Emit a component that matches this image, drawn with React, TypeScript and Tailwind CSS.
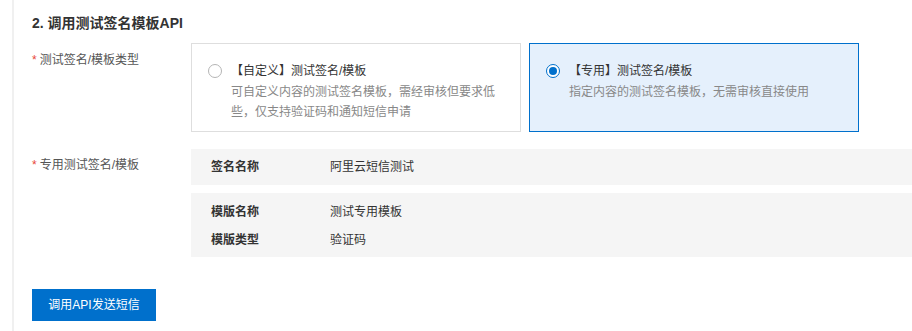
import React, { useState } from "react"

const FONT = "font-['Liberation_Sans','Noto_Sans_CJK_SC',sans-serif]"

type CardOption = {
    key: string
    title: string
    desc: string
}

const OPTIONS: CardOption[] = [
    {
        key: "custom",
        title: "【自定义】测试签名/模板",
        desc: "可自定义内容的测试签名模板，需经审核但要求低些，仅支持验证码和通知短信申请",
    },
    {
        key: "dedicated",
        title: "【专用】测试签名/模板",
        desc: "指定内容的测试签名模板，无需审核直接使用",
    },
]

function Label({ children, className = "" }: { children: React.ReactNode; className?: string }) {
    return (
        <div className={`w-[159px] shrink-0 text-[12px] leading-[20px] text-[#555] ${className}`}>
            <span className="text-[#e84738] mr-[3px]">*</span>
            {children}
        </div>
    )
}

function Radio({ checked }: { checked: boolean }) {
    return checked ? (
        <span className="mt-[3px] flex h-[14px] w-[14px] shrink-0 items-center justify-center rounded-full border border-[#0070cc] bg-white">
            <span className="h-[8px] w-[8px] rounded-full bg-[#0070cc]" />
        </span>
    ) : (
        <span className="mt-[3px] h-[14px] w-[14px] shrink-0 rounded-full border border-[#b5b5b5] bg-white" />
    )
}

export default function App() {
    const [selected, setSelected] = useState("dedicated")

    return (
        <div className={`min-h-[331px] w-full bg-white pl-[12px] ${FONT}`}>
            <div className="min-h-[331px] border-l-2 border-[#f0f0f0] pl-[18px] pt-[13px]">
                {/* Section title */}
                <h2 className="text-[14px] font-bold leading-[20px] text-[#333]">
                    2. 调用测试签名模板API
                </h2>

                {/* Type selection */}
                <div className="mt-[10px] flex">
                    <Label className="pt-[7px]">测试签名/模板类型</Label>
                    <div className="flex gap-[8px]">
                        {OPTIONS.map((opt) => {
                            const active = selected === opt.key
                            return (
                                <button
                                    key={opt.key}
                                    type="button"
                                    onClick={() => setSelected(opt.key)}
                                    className={`flex h-[89px] w-[330px] gap-[9px] border pl-[16px] pr-[15px] pt-[17px] text-left ${
                                        active
                                            ? "border-[#0070cc] bg-[#e5f0fc]"
                                            : "border-[#dedede] bg-white"
                                    }`}
                                >
                                    <Radio checked={active} />
                                    <div className="text-[12px] leading-[20px]">
                                        <div className="text-[#333]">{opt.title}</div>
                                        <div className="mt-[1px] text-[#888]">{opt.desc}</div>
                                    </div>
                                </button>
                            )
                        })}
                    </div>
                </div>

                {/* Dedicated signature / template info */}
                <div className="mt-[17px] flex">
                    <Label className="pt-[6px]">专用测试签名/模板</Label>
                    <div className="flex flex-1 flex-col gap-[8px] text-[12px] text-[#333]">
                        <div className="flex h-[36px] items-center bg-[#f5f5f5] pl-[20px]">
                            <span className="w-[119px] font-bold">签名名称</span>
                            <span>阿里云短信测试</span>
                        </div>
                        <div className="bg-[#f5f5f5] pb-[3px] pl-[20px] pt-[5px] leading-[28px]">
                            <div className="flex">
                                <span className="w-[119px] font-bold">模版名称</span>
                                <span>测试专用模板</span>
                            </div>
                            <div className="flex">
                                <span className="w-[119px] font-bold">模版类型</span>
                                <span>验证码</span>
                            </div>
                        </div>
                    </div>
                </div>

                {/* Submit */}
                <button
                    type="button"
                    className="mt-[32px] h-[32px] w-[124px] bg-[#0070cc] text-[12px] text-white"
                >
                    调用API发送短信
                </button>
            </div>
        </div>
    )
}
